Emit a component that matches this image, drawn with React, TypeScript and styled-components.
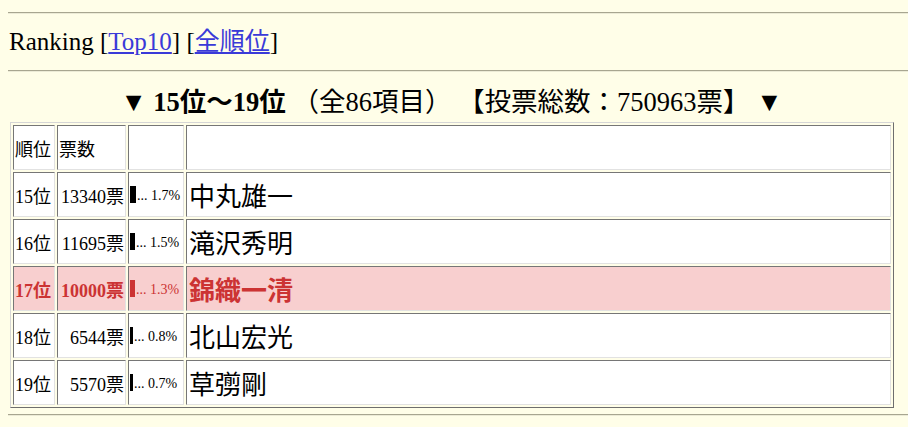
import React from "react";
import styled, { createGlobalStyle } from "styled-components";

const GlobalStyle = createGlobalStyle`
  html, body {
    margin: 0;
    padding: 0;
    background: #fffee8;
  }
  body {
    font-family: "Liberation Serif", "Noto Sans CJK JP", serif;
    color: #000;
  }
`;

const Page = styled.div`
  display: flex;
  flex-direction: column;
  padding: 0 0 0 8px;
`;

const Rule = styled.hr<{ $top: number }>`
  margin: ${(p) => p.$top}px 0 0 0;
  height: 0;
  border: 0;
  border-top: 1px solid #a8a690;
  border-bottom: 1px solid #ecebd6;
`;

const NavLine = styled.div`
  margin-top: 14px;
  height: 28px;
  line-height: 28px;
  font-size: 25px;
  padding-left: 1px;
`;

const NavLink = styled.a`
  color: #3a3ad8;
  text-decoration: underline;
`;

const Title = styled.div`
  margin-top: 16px;
  height: 28px;
  line-height: 28px;
  font-size: 26.5px;
  text-align: center;
  white-space: pre;
  padding-right: 13px;
`;

const Strong = styled.b`
  font-weight: bold;
`;

const Table = styled.table`
  margin: 6px 0 0 2px;
  width: 884px;
  border-collapse: separate;
  border-spacing: 2px;
  border: 1px solid;
  border-color: #d6d6d6 #6e6e6e #6e6e6e #d6d6d6;
  background: transparent;
`;

const Row = styled.tr<{ $hl?: boolean }>`
  background: ${(p) => (p.$hl ? "#f8cfcf" : "#ffffff")};
  color: ${(p) => (p.$hl ? "#cc3333" : "#000")};
  font-weight: ${(p) => (p.$hl ? "bold" : "normal")};
`;

const Cell = styled.td<{ $w?: number; $align?: string }>`
  height: 45px;
  box-sizing: border-box;
  padding: 0 1px;
  border: 1px solid;
  border-color: #767676 #e2e2e2 #e2e2e2 #767676;
  font-size: 18px;
  vertical-align: middle;
  text-align: ${(p) => p.$align || "left"};
  white-space: nowrap;
  ${(p) => (p.$w ? `width: ${p.$w}px;` : "")}
`;

const NameCell = styled(Cell)`
  font-size: 26px;
  padding-left: 2px;
`;

const Bar = styled.span<{ $hl?: boolean }>`
  display: inline-block;
  height: 17px;
  vertical-align: -3px;
  background: ${(p) => (p.$hl ? "#cc3333" : "#000")};
`;

const Pct = styled.span`
  font-size: 14px;
  font-weight: normal;
  margin-left: 1px;
`;

type Item = { rank: number; votes: number; pct: number; name: string; hl?: boolean };

const items: Item[] = [
  { rank: 15, votes: 13340, pct: 1.7, name: "中丸雄一" },
  { rank: 16, votes: 11695, pct: 1.5, name: "滝沢秀明" },
  { rank: 17, votes: 10000, pct: 1.3, name: "錦織一清", hl: true },
  { rank: 18, votes: 6544, pct: 0.8, name: "北山宏光" },
  { rank: 19, votes: 5570, pct: 0.7, name: "草彅剛" },
];

export default function App() {
  return (
    <>
      <GlobalStyle />
      <Page>
        <Rule $top={12} />
        <NavLine>
          Ranking [<NavLink href="#">Top10</NavLink>] [<NavLink href="#">全順位</NavLink>]
        </NavLine>
        <Rule $top={14} />
        <Title>
          <Strong>▼ 15位〜19位</Strong>{" （全86項目） 【投票総数：750963票】 "}<Strong>▼</Strong>
        </Title>
        <Table>
          <tbody>
            <Row>
              <Cell $w={42}>順位</Cell>
              <Cell $w={69}>票数</Cell>
              <Cell $w={56}></Cell>
              <NameCell></NameCell>
            </Row>
            {items.map((it) => (
              <Row key={it.rank} $hl={it.hl}>
                <Cell>{it.rank}位</Cell>
                <Cell $align="right">{it.votes}票</Cell>
                <Cell>
                  <Bar $hl={it.hl} style={{ width: Math.max(3, Math.round(it.pct * 3.5)) }} />
                  <Pct>... {it.pct.toFixed(1)}%</Pct>
                </Cell>
                <NameCell>{it.name}</NameCell>
              </Row>
            ))}
          </tbody>
        </Table>
        <Rule $top={6} />
      </Page>
    </>
  );
}
